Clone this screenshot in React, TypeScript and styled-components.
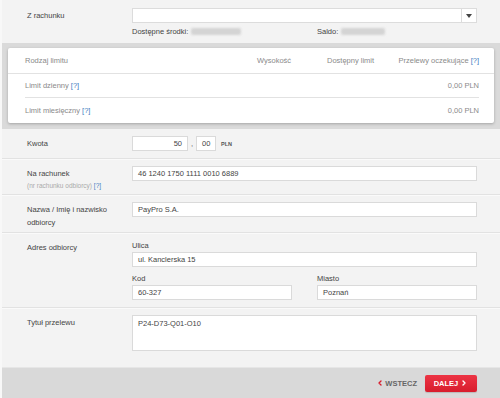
import React from "react";
import styled, { createGlobalStyle } from "styled-components";
import { ChevronLeft, ChevronRight } from "lucide-react";

const Global = createGlobalStyle`
  html, body { margin: 0; padding: 0; background: #f3f3f3; }
  body { font-family: "Liberation Sans", Arial, sans-serif; font-size: 7.5px; color: #444; }
  * { box-sizing: border-box; }
`;

const Page = styled.div`
  width: 500px;
  height: 398px;
  background: #f3f3f3;
  display: flex;
  flex-direction: column;
  border-left: 2px solid #f8f8f8;
`;

const TopSection = styled.div`
  height: 43px;
  display: grid;
  grid-template-columns: 105px 1fr;
  padding: 8px 23px 0 25px;
`;

const TopLabel = styled.div`
  line-height: 15px;
  color: #444;
`;

const SelectBox = styled.div`
  height: 15px;
  background: #fff;
  border: 1px solid #dcdcdc;
  display: flex;
  justify-content: flex-end;
`;

const SelectArrow = styled.div`
  width: 15px;
  border-left: 1px solid #dcdcdc;
  display: flex;
  align-items: center;
  justify-content: center;
  &::after {
    content: "";
    border-left: 3px solid transparent;
    border-right: 3px solid transparent;
    border-top: 4px solid #444;
  }
`;

const InfoLine = styled.div`
  display: grid;
  grid-template-columns: 185px 1fr;
  margin-top: 3px;
  line-height: 11px;
`;

const InfoItem = styled.div`
  display: flex;
  align-items: center;
  gap: 3px;
  color: #444;
`;

const Blur = styled.span<{ $w: number }>`
  display: inline-block;
  width: ${(p) => p.$w}px;
  height: 7px;
  background: #d4d4d4;
  filter: blur(1px);
  border-radius: 2px;
`;

const LimitBand = styled.div`
  background: #dadada;
  padding: 5px 6px 6px 6px;
`;

const LimitCard = styled.div`
  background: #fff;
  border-radius: 2px;
  box-shadow: 0 1px 3px rgba(0, 0, 0, 0.25);
`;

const LimitHead = styled.div`
  height: 26px;
  display: grid;
  grid-template-columns: 1fr 70px 68px 84px;
  align-items: center;
  padding: 0 15px 0 17px;
  border-bottom: 1px solid #e2e2e2;
  color: #8a8a8a;
`;

const LimitRow = styled.div<{ $last?: boolean; $h: number }>`
  height: ${(p) => p.$h}px;
  margin: 0 15px 0 17px;
  display: flex;
  align-items: center;
  justify-content: space-between;
  color: #8a8a8a;
  border-bottom: ${(p) => (p.$last ? "none" : "1px solid #e2e2e2")};
`;

const Help = styled.span`
  color: #3d7cc0;
`;

const Right = styled.span`
  text-align: right;
`;

const Form = styled.div`
  flex: 1;
  display: flex;
  flex-direction: column;
`;

const Row = styled.div<{ $first?: boolean }>`
  display: grid;
  grid-template-columns: 105px 1fr;
  padding: 7px 23px 7px 25px;
  border-top: ${(p) => (p.$first ? "none" : "1px solid #e2e2e2")};
  box-shadow: ${(p) => (p.$first ? "none" : "inset 0 1px 0 #fafafa")};
`;

const Label = styled.div`
  padding-top: 1px;
  line-height: 13px;
  margin-bottom: -4px;
  color: #444;
`;

const SubLabel = styled.div`
  line-height: 11px;
  font-size: 6.5px;
  color: #aaa;
`;

const Field = styled.div`
  display: flex;
  flex-direction: column;
`;

const Input = styled.div<{ $w?: number; $right?: boolean; $h?: number }>`
  height: ${(p) => p.$h ?? 15}px;
  width: ${(p) => (p.$w ? `${p.$w}px` : "auto")};
  background: #fff;
  border: 1px solid #dadada;
  padding: ${(p) => (p.$h ? "3px 5px" : "0 5px")};
  line-height: ${(p) => (p.$h ? "10px" : "13px")};
  text-align: ${(p) => (p.$right ? "right" : "left")};
  color: #444;
  white-space: nowrap;
`;

const AmountLine = styled.div`
  display: flex;
  align-items: center;
`;

const Comma = styled.span`
  width: 8px;
  text-align: center;
  color: #555;
`;

const Currency = styled.span`
  margin-left: 5px;
  font-size: 5.5px;
  font-weight: bold;
  color: #555;
`;

const FieldLabel = styled.div`
  line-height: 13px;
  margin-top: -1px;
`;

const Pair = styled.div`
  display: grid;
  grid-template-columns: 1fr 1fr;
  column-gap: 25px;
  margin-top: 6px;
`;

const Footer = styled.div`
  height: 31px;
  background: #d9d9d9;
  border-top: 1px solid #e6e6e6;
  display: flex;
  align-items: center;
  justify-content: flex-end;
  padding: 0 23px 0 0;
  gap: 8px;
`;

const BackLink = styled.span`
  font-weight: bold;
  color: #666;
  font-size: 7.5px;
  display: flex;
  align-items: center;
  gap: 1px;
`;

const NextButton = styled.div`
  width: 52px;
  height: 17px;
  background: linear-gradient(#ec3444, #d81d2d);
  border-radius: 2px;
  color: #fff;
  font-weight: bold;
  display: flex;
  align-items: center;
  justify-content: center;
  gap: 2px;
  box-shadow: 0 1px 1px rgba(0, 0, 0, 0.15);
`;

export default function App() {
  return (
    <>
      <Global />
      <Page>
        <TopSection>
          <TopLabel>Z rachunku</TopLabel>
          <div>
            <SelectBox>
              <SelectArrow />
            </SelectBox>
            <InfoLine>
              <InfoItem>
                Dostępne środki: <Blur $w={50} />
              </InfoItem>
              <InfoItem>
                Saldo: <Blur $w={44} />
              </InfoItem>
            </InfoLine>
          </div>
        </TopSection>

        <LimitBand>
          <LimitCard>
            <LimitHead>
              <span>Rodzaj limitu</span>
              <span>Wysokość</span>
              <span>Dostępny limit</span>
              <Right>
                Przelewy oczekujące <Help>[?]</Help>
              </Right>
            </LimitHead>
            <LimitRow $h={24}>
              <span>
                Limit dzienny <Help>[?]</Help>
              </span>
              <span>0,00 PLN</span>
            </LimitRow>
            <LimitRow $h={25} $last>
              <span>
                Limit miesięczny <Help>[?]</Help>
              </span>
              <span>0,00 PLN</span>
            </LimitRow>
          </LimitCard>
        </LimitBand>

        <Form>
          <Row $first>
            <Label>Kwota</Label>
            <AmountLine>
              <Input $w={56} $right>
                50
              </Input>
              <Comma>,</Comma>
              <Input $w={20}>00</Input>
              <Currency>PLN</Currency>
            </AmountLine>
          </Row>
          <Row>
            <Label>
              Na rachunek
              <SubLabel>
                (nr rachunku odbiorcy) <Help>[?]</Help>
              </SubLabel>
            </Label>
            <Field>
              <Input>46 1240 1750 1111 0010 6889</Input>
            </Field>
          </Row>
          <Row>
            <Label>
              Nazwa / Imię i nazwisko
              <br />
              odbiorcy
            </Label>
            <Field>
              <Input>PayPro S.A.</Input>
            </Field>
          </Row>
          <Row>
            <Label>Adres odbiorcy</Label>
            <Field>
              <FieldLabel>Ulica</FieldLabel>
              <Input>ul. Kanclerska 15</Input>
              <Pair>
                <Field>
                  <FieldLabel>Kod</FieldLabel>
                  <Input>60-327</Input>
                </Field>
                <Field>
                  <FieldLabel>Miasto</FieldLabel>
                  <Input>Poznań</Input>
                </Field>
              </Pair>
            </Field>
          </Row>
          <Row>
            <Label>Tytuł przelewu</Label>
            <Field>
              <Input $h={36}>P24-D73-Q01-O10</Input>
            </Field>
          </Row>
        </Form>

        <Footer>
          <BackLink>
            <ChevronLeft size={8} strokeWidth={4} color="#d81d2d" />
            WSTECZ
          </BackLink>
          <NextButton>
            DALEJ
            <ChevronRight size={8} strokeWidth={4} color="#ffffff" />
          </NextButton>
        </Footer>
      </Page>
    </>
  );
}
